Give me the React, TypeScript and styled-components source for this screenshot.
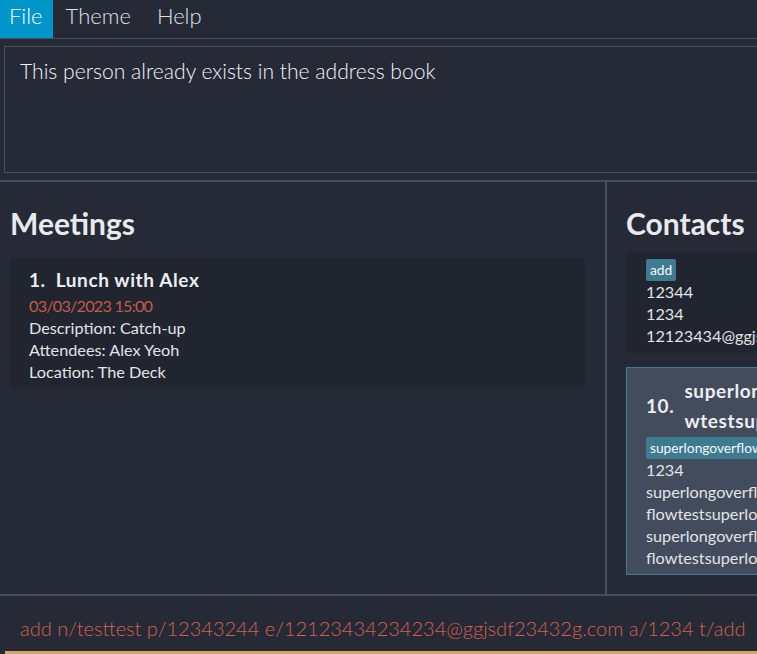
import React, { useLayoutEffect, useRef } from "react";
import styled, { createGlobalStyle } from "styled-components";

const GlobalStyle = createGlobalStyle`
  html, body {
    margin: 0;
    padding: 0;
    background: #252a36;
    overflow: hidden;
  }
  * { box-sizing: border-box; }
`;

const Window = styled.div`
  width: 757px;
  height: 654px;
  overflow: hidden;
  background: #252a36;
  color: #e6e7ea;
  font-family: Lato, "Open Sans", sans-serif;
  display: flex;
  flex-direction: column;
`;

const MenuBar = styled.nav`
  flex: none;
  display: flex;
  height: 39px;
  border-bottom: 1px solid #4a4f5b;
`;

const MenuItem = styled.div<{ $active?: boolean }>`
  height: 38px;
  padding: ${(p) => (p.$active ? "0 10px 0 9px" : "0 13px")};
  font-size: 22px;
  font-weight: 300;
  line-height: 31px;
  color: ${(p) => (p.$active ? "#ffffff" : "#dfe1e6")};
  background: ${(p) => (p.$active ? "#0096c9" : "transparent")};
`;

const ResultArea = styled.section`
  flex: none;
  padding: 7px 0 7px 4px;
`;

const ResultBox = styled.div`
  width: calc(100% + 20px);
  height: 127px;
  border: 1px solid #4b505c;
  padding: 9px 15px 0;
  font-size: 21.1px;
  font-weight: 300;
  line-height: 29px;
  color: #f2f4f7;
`;

const Separator = styled.div`
  flex: none;
  height: 2px;
  background: #4a4f5b;
`;

const Main = styled.main`
  flex: none;
  height: 412px;
  display: grid;
  grid-template-columns: 605px 2px 420px;
  grid-template-rows: minmax(0, 1fr);
  overflow: hidden;
`;

const Splitter = styled.div`
  background: #4a5060;
`;

const Panel = styled.section<{ $padLeft: number; $padRight: number }>`
  padding: 21px ${(p) => p.$padRight}px 0 ${(p) => p.$padLeft}px;
  display: flex;
  flex-direction: column;
  min-height: 0;
  overflow: hidden;
`;

const PanelTitle = styled.h2`
  flex: none;
  margin: 0;
  font-size: 30px;
  font-weight: 700;
  line-height: 41px;
  color: #e8e9ec;
`;

const MeetingList = styled.div`
  margin-top: 14px;
  display: flex;
  flex-direction: column;
`;

const ContactViewport = styled.div`
  margin-top: 8px;
  flex: 1;
  min-height: 0;
  overflow: hidden;
`;

const ContactList = styled.div`
  display: flex;
  flex-direction: column;
  gap: 14px;
  padding-bottom: 19px;
`;

const MeetingCard = styled.article`
  background: #21252f;
  padding: 10px 19px 6px;
`;

const ContactCard = styled.article<{ $selected?: boolean }>`
  flex: none;
  background: ${(p) => (p.$selected ? "#434c5d" : "#21252f")};
  border: 1px solid ${(p) => (p.$selected ? "#3e7b91" : "transparent")};
  padding: 8px 19px 5px;
`;

const TitleRow = styled.div<{ $lineHeight: number }>`
  display: flex;
  align-items: center;
  gap: 10px;
  font-size: 19px;
  font-weight: 700;
  letter-spacing: 0.6px;
  line-height: ${(p) => p.$lineHeight}px;
  color: #eceef1;
  white-space: nowrap;
`;

const NameBlock = styled.div`
  display: flex;
  flex-direction: column;
`;

const MeetingTitle = styled(TitleRow)`
  margin-bottom: 3px;
`;

const Tags = styled.div`
  display: flex;
  gap: 4px;
  margin-top: 1px;
`;

const Tag = styled.span`
  display: inline-block;
  background: #3e7b91;
  color: #f4f7f9;
  font-size: 13.75px;
  line-height: 20px;
  padding: 1px 4px;
  border-radius: 2px;
  white-space: nowrap;
`;

const Detail = styled.div`
  font-size: 16.25px;
  line-height: 22px;
  color: #e2e3e6;
  white-space: nowrap;
`;

const DateLine = styled(Detail)`
  color: #c65a49;
  letter-spacing: -0.8px;
`;

const CommandArea = styled.section`
  flex: 1;
  display: flex;
  flex-direction: column;
  padding: 18px 0 0 20px;
`;

const CommandText = styled.div`
  font-size: 20px;
  font-weight: 300;
  line-height: 29px;
  color: #d6604b;
  white-space: nowrap;
`;

const StatusEdge = styled.div`
  margin-top: auto;
  margin-left: -15px;
  height: 3px;
  background: #d2a566;
`;

type Contact = {
  index: number;
  name: string[];
  tags: string[];
  lines: string[];
  selected?: boolean;
};

const contacts: Contact[] = [
  {
    index: 9,
    name: ["testtest"],
    tags: ["add"],
    lines: ["12344", "1234", "12123434@ggjsdf23432g.com"],
  },
  {
    index: 10,
    name: ["superlongoverflo", "wtestsuperlongoverflowtest"],
    tags: ["superlongoverflowtestsuperlongoverflowtest"],
    lines: [
      "1234",
      "superlongoverflowtestsuperlongover",
      "flowtestsuperlongoverflowtest",
      "superlongoverflowtestsuperlongover",
      "flowtestsuperlongoverflowtest@example.com",
    ],
    selected: true,
  },
];

export default function App() {
  const viewportRef = useRef<HTMLDivElement>(null);

  useLayoutEffect(() => {
    const el = viewportRef.current;
    if (el) el.scrollTop = el.scrollHeight;
  }, []);

  return (
    <>
      <GlobalStyle />
      <Window>
        <MenuBar>
          <MenuItem $active>File</MenuItem>
          <MenuItem>Theme</MenuItem>
          <MenuItem>Help</MenuItem>
        </MenuBar>

        <ResultArea>
          <ResultBox>This person already exists in the address book</ResultBox>
        </ResultArea>

        <Separator />

        <Main>
          <Panel $padLeft={10} $padRight={20}>
            <PanelTitle>Meetings</PanelTitle>
            <MeetingList>
              <MeetingCard>
                <MeetingTitle $lineHeight={24}>
                  <span>1.</span>
                  <span>Lunch with Alex</span>
                </MeetingTitle>
                <DateLine>03/03/2023 15:00</DateLine>
                <Detail>Description: Catch-up</Detail>
                <Detail>Attendees: Alex Yeoh</Detail>
                <Detail>Location: The Deck</Detail>
              </MeetingCard>
            </MeetingList>
          </Panel>

          <Splitter />

          <Panel $padLeft={19} $padRight={0}>
            <PanelTitle>Contacts</PanelTitle>
            <ContactViewport ref={viewportRef}>
              <ContactList>
                {contacts.map((c) => (
                  <ContactCard key={c.index} $selected={c.selected}>
                    <TitleRow $lineHeight={30}>
                      <span>{c.index}.</span>
                      <NameBlock>
                        {c.name.map((n) => (
                          <span key={n}>{n}</span>
                        ))}
                      </NameBlock>
                    </TitleRow>
                    <Tags>
                      {c.tags.map((t) => (
                        <Tag key={t}>{t}</Tag>
                      ))}
                    </Tags>
                    {c.lines.map((l, i) => (
                      <Detail key={i}>{l}</Detail>
                    ))}
                  </ContactCard>
                ))}
              </ContactList>
            </ContactViewport>
          </Panel>
        </Main>

        <Separator />

        <CommandArea>
          <CommandText>
            add n/testtest p/12343244 e/12123434234234@ggjsdf23432g.com a/1234 t/add
          </CommandText>
          <StatusEdge />
        </CommandArea>
      </Window>
    </>
  );
}
